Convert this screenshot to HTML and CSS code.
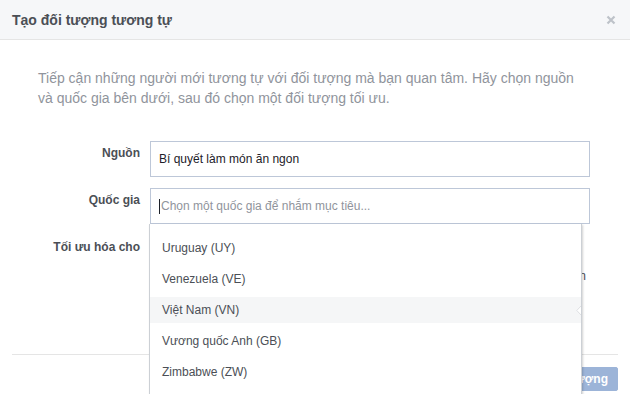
FILE: index.html
```html
<!DOCTYPE html>
<html lang="vi">
<head>
  <meta charset="UTF-8" />
  <meta name="viewport" content="width=device-width, initial-scale=1.0"/>
  <title>Tạo đối tượng tương tự</title>
  <link rel="stylesheet" href="styles.css">
</head>
<body>
  <div class="dialog">
    <div class="dialog-header">
      <h2 class="dialog-title">Tạo đối tượng tương tự</h2>
      <button class="close" aria-label="Đóng">
        <svg width="10" height="10" viewBox="0 0 10 10">
          <path d="M1.5 1.5 L8.5 8.5 M8.5 1.5 L1.5 8.5" stroke="#bec2c9" stroke-width="2.2" />
        </svg>
      </button>
    </div>

    <div class="dialog-body">
      <p class="intro">Tiếp cận những người mới tương tự với đối tượng mà bạn quan tâm. Hãy chọn nguồn và quốc gia bên dưới, sau đó chọn một đối tượng tối ưu.</p>

      <div class="form">
        <div class="row">
          <label class="label">Nguồn</label>
          <div class="field">
            <div class="input">Bí quyết làm món ăn ngon</div>
          </div>
        </div>

        <div class="row">
          <label class="label">Quốc gia</label>
          <div class="field country">
            <div class="input placeholder"><span class="caret"></span>Chọn một quốc gia để nhắm mục tiêu...</div>
            <ul class="menu">
              <li>Uruguay (UY)</li>
              <li>Venezuela (VE)</li>
              <li class="active">Việt Nam (VN)
                <svg class="nub" width="6" height="11" viewBox="0 0 6 11">
                  <path d="M5.5 0.5 L0.8 5.5 L5.5 10.5" fill="#fff" stroke="#dddfe2" />
                </svg>
              </li>
              <li>Vương quốc Anh (GB)</li>
              <li>Zimbabwe (ZW)</li>
            </ul>
          </div>
        </div>

        <div class="row">
          <label class="label">Tối ưu hóa cho</label>
          <div class="field options">
            <p class="option-note">Đối tượng sẽ giống nhất với nguồn</p>
          </div>
        </div>
      </div>
    </div>

    <div class="dialog-footer">
      <button class="primary" disabled>Tạo đối tượng</button>
    </div>
  </div>
</body>
</html>
```

FILE: styles.css
```css
body {
  margin: 0;
  font-family: "Liberation Sans", Arial, sans-serif;
  background: #ffffff;
  color: #4b4f56;
}

.dialog {
  width: 630px;
  height: 394px;
  overflow: hidden;
  background: #ffffff;
}

.dialog-header {
  display: flex;
  align-items: center;
  justify-content: space-between;
  height: 39px;
  padding: 0 12px;
  background: #f6f7f9;
  border-bottom: 1px solid #e5e5e5;
}

.dialog-title {
  margin: 0;
  font-size: 14px;
  font-weight: bold;
  color: #4b4f56;
}

.close {
  display: flex;
  padding: 0;
  margin-right: 2px;
  border: none;
  background: none;
}

.dialog-body {
  padding: 28px 38px 24px 38px;
}

.intro {
  margin: 0;
  font-size: 14px;
  line-height: 20px;
  color: #90949c;
}

.form {
  margin-top: 33px;
  margin-left: -38px;
}

.row {
  display: grid;
  grid-template-columns: 140px 440px;
  column-gap: 10px;
  margin-bottom: 11px;
}

.row:last-child {
  margin-bottom: 0;
}

.label {
  padding-top: 4px;
  font-size: 12px;
  line-height: 16px;
  font-weight: bold;
  text-align: right;
  color: #4b4f56;
}

.field {
  position: relative;
}

.input {
  display: flex;
  align-items: center;
  height: 34px;
  padding: 0 8px;
  border: 1px solid #bdc7d8;
  font-size: 12px;
  color: #1d2129;
}

.placeholder {
  color: #90949c;
}

.caret {
  width: 1px;
  height: 15px;
  margin-right: 1px;
  background: #1d2129;
}

.menu {
  position: absolute;
  top: 100%;
  left: -1px;
  width: 431px;
  height: 180px;
  margin: 0;
  padding: 11px 0 0 0;
  list-style: none;
  overflow: hidden;
  background: #ffffff;
  border: 1px solid #ccd0d5;
  border-top: none;
  box-shadow: 1px 1px 2px rgba(0, 0, 0, 0.18);
  z-index: 2;
}

.menu li {
  position: relative;
  height: 26px;
  margin-bottom: 5px;
  padding-left: 12px;
  font-size: 12px;
  line-height: 26px;
  color: #4b4f56;
}

.menu li.active {
  background: #f5f6f7;
}

.nub {
  position: absolute;
  right: -1px;
  top: 8px;
}

.options {
  height: 95px;
  font-size: 12px;
  line-height: 16px;
  color: #4b4f56;
}

.option-note {
  margin: 33px 4px 0 0;
  text-align: right;
}

.dialog-footer {
  display: flex;
  justify-content: flex-end;
  margin: 0 12px;
  padding: 12px 0;
  border-top: 1px solid #e5e5e5;
}

.primary {
  height: 24px;
  padding: 0 9px;
  border: 1px solid #9cb4d8;
  border-radius: 2px;
  background: #9cb4d8;
  font-family: "Liberation Sans", Arial, sans-serif;
  font-size: 12px;
  font-weight: bold;
  color: #ffffff;
}
```
